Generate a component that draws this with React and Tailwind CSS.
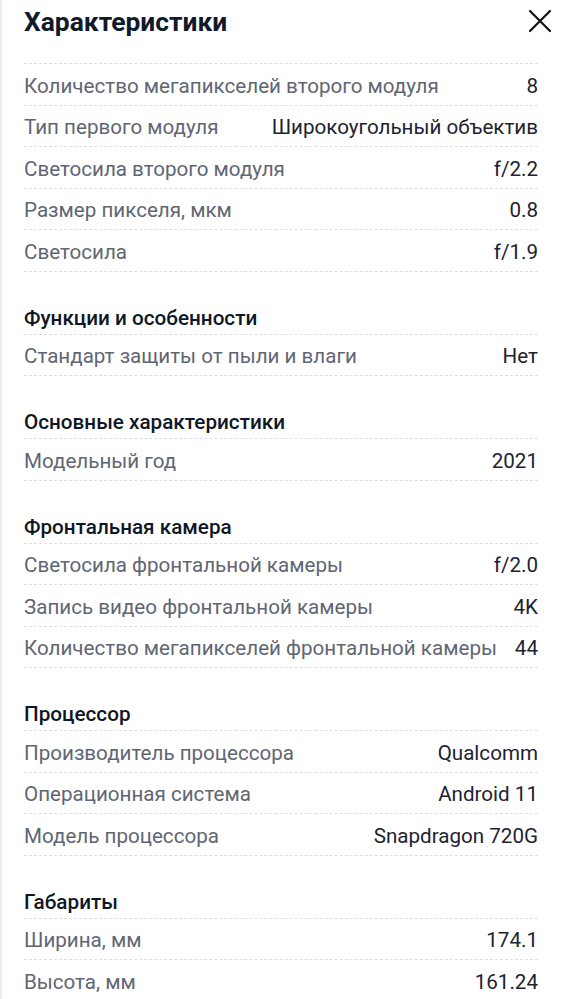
import React from "react";

const sections = [
  {
    title: null,
    rows: [
      ["Количество мегапикселей второго модуля", "8"],
      ["Тип первого модуля", "Широкоугольный объектив"],
      ["Светосила второго модуля", "f/2.2"],
      ["Размер пикселя, мкм", "0.8"],
      ["Светосила", "f/1.9"],
    ],
  },
  {
    title: "Функции и особенности",
    rows: [["Стандарт защиты от пыли и влаги", "Нет"]],
  },
  {
    title: "Основные характеристики",
    rows: [["Модельный год", "2021"]],
  },
  {
    title: "Фронтальная камера",
    rows: [
      ["Светосила фронтальной камеры", "f/2.0"],
      ["Запись видео фронтальной камеры", "4K"],
      ["Количество мегапикселей фронтальной камеры", "44"],
    ],
  },
  {
    title: "Процессор",
    rows: [
      ["Производитель процессора", "Qualcomm"],
      ["Операционная система", "Android 11"],
      ["Модель процессора", "Snapdragon 720G"],
    ],
  },
  {
    title: "Габариты",
    rows: [
      ["Ширина, мм", "174.1"],
      ["Высота, мм", "161.24"],
    ],
  },
];

const Row = ({ label, value }) => (
  <div className="flex h-[41.5px] items-center justify-between gap-3 border-b border-dashed border-[#dcdfe4] pt-[3px]">
    <span className="whitespace-nowrap text-[20.6px] leading-[24px] text-[#5f6673]">{label}</span>
    <span className="shrink-0 whitespace-nowrap text-[20.6px] leading-[24px] text-[#1c2331]">{value}</span>
  </div>
);

export default function App() {
  return (
    <div
      className="h-[999px] overflow-hidden border-l-2 border-[#ededed] bg-white pl-[22px] pr-[42px]"
      style={{ fontFamily: "Roboto, 'Noto Sans', sans-serif" }}
    >
      <div className="flex h-[64px] items-start justify-between border-b border-dashed border-[#dcdfe4] pt-[7px]">
        <h1 className="text-[26.4px] font-bold leading-[30px] text-[#111a2b]">Характеристики</h1>
        <button className="-mr-[14px] mt-[2px] text-[#111]">
          <svg width="24" height="24" viewBox="0 0 24 24" fill="none" stroke="currentColor" strokeWidth="2.2" strokeLinecap="round">
            <path d="M2 2L22 22M22 2L2 22" />
          </svg>
        </button>
      </div>
      {sections.map((s, i) => (
        <div key={i}>
          {s.title && (
            <div className="flex h-[63px] items-end border-b border-dashed border-[#dcdfe4] pb-[4px]">
              <h2 className="text-[20.7px] font-medium leading-[24px] text-[#0f1726]">{s.title}</h2>
            </div>
          )}
          {s.rows.map(([l, v]) => (
            <Row key={l} label={l} value={v} />
          ))}
        </div>
      ))}
    </div>
  );
}
